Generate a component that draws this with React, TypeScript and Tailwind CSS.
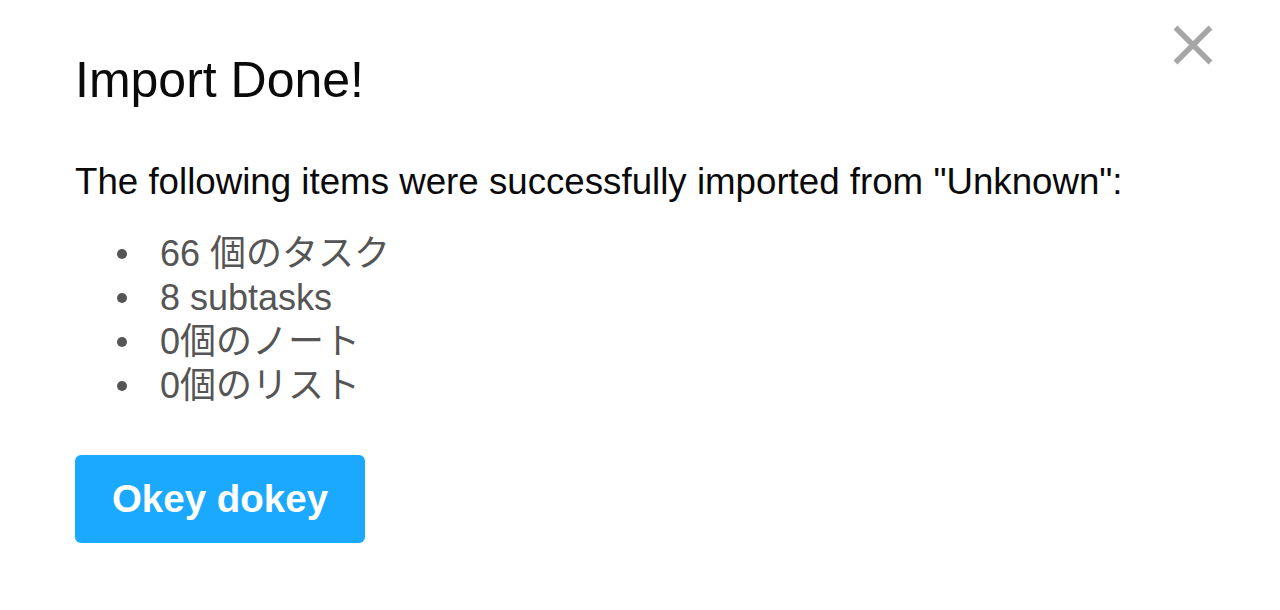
export default function App() {
  const items = ["66 個のタスク", "8 subtasks", "0個のノート", "0個のリスト"];
  return (
    <div className="w-[1280px] h-[610px] bg-white relative" style={{ fontFamily: '"Liberation Sans", Arial, "Noto Sans CJK JP", sans-serif' }}>
      <button className="absolute left-[1173px] top-[25px] w-[40px] h-[40px] flex items-center justify-center" aria-label="Close">
        <svg width="40" height="40" viewBox="0 0 40 40">
          <path d="M2.5 2.5 L37.5 37.5 M37.5 2.5 L2.5 37.5" stroke="#a6a6a6" strokeWidth="5.5" strokeLinecap="butt" />
        </svg>
      </button>
      <div className="pl-[75px] pt-[52px]">
        <h1 className="text-[50px] leading-[56px] text-[#0a0a0a]">Import Done!</h1>
        <p className="mt-[52px] text-[36.7px] leading-[44px] text-[#0a0a0a]">The following items were successfully imported from "Unknown":</p>
        <ul className="mt-[28px] text-[36px] leading-[44px] text-[#555]">
          {items.map((t) => (
            <li key={t} className="flex items-center h-[44px]">
              <span className="ml-[42px] w-[10px] h-[10px] rounded-full bg-[#555] shrink-0" />
              <span className="ml-[33px]">{t}</span>
            </li>
          ))}
        </ul>
        <button className="mt-[47px] w-[290px] h-[88px] rounded-[6px] bg-[#1ba9ff] text-white text-[38.5px] font-bold">Okey dokey</button>
      </div>
    </div>
  );
}
